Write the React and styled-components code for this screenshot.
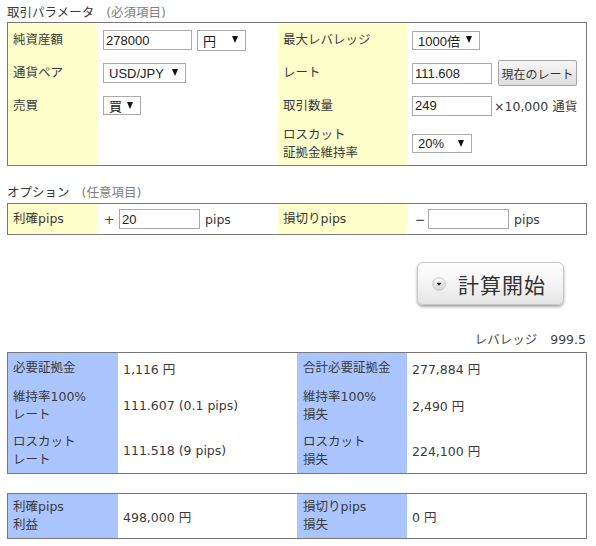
import React from "react";
import styled, { createGlobalStyle } from "styled-components";

const GlobalStyle = createGlobalStyle`
  body {
    margin: 0;
    background: #fff;
    color: #3a3a3a;
    font-family: "DejaVu Sans", "Noto Sans CJK JP", sans-serif;
    font-size: 12.5px;
  }
`;

const Page = styled.div`
  width: 580px;
  margin-left: 7px;
  padding-top: 4px;
`;

const SectionTitle = styled.div`
  line-height: 18px;
  margin-top: ${(p) => p.$top || 0}px;
  span {
    color: #808080;
    margin-left: 12px;
  }
`;

const Grid = styled.div`
  display: grid;
  grid-template-columns: ${(p) => p.$cols};
  grid-template-rows: ${(p) => p.$rows};
  border: 1px solid #777;
  margin-top: ${(p) => p.$top || 0}px;
`;

const Label = styled.div`
  display: flex;
  align-items: center;
  padding-left: ${(p) => p.$pad || 5}px;
  background: ${(p) => (p.$blue ? "#aac5ff" : "#ffffcc")};
  line-height: 18px;
`;

const Cell = styled.div`
  display: flex;
  align-items: center;
  padding-left: ${(p) => p.$pad || 5}px;
  white-space: nowrap;
`;

const Input = styled.input`
  box-sizing: border-box;
  width: ${(p) => p.$w}px;
  height: ${(p) => p.$h || 21}px;
  border: 1px solid #a9a9a9;
  padding: 0 2px;
  margin: 0;
  font-family: "Liberation Sans", Arial, "Noto Sans CJK JP", sans-serif;
  font-size: 13px;
  color: #222;
  outline: none;
`;

const SelectBox = styled.div`
  position: relative;
  box-sizing: border-box;
  width: ${(p) => p.$w}px;
  height: ${(p) => p.$h || 20}px;
  margin-left: ${(p) => p.$ml || 0}px;
  border: 1px solid #a9a9a9;
  background: #fff;
  display: flex;
  align-items: center;
  padding-left: 5px;
  font-family: "Liberation Sans", Arial, "Noto Sans CJK JP", sans-serif;
  font-size: 13px;
  color: #222;
`;

const Arrow = styled.span`
  position: absolute;
  right: 7px;
  top: 50%;
  margin-top: -4px;
  width: 0;
  height: 0;
  border-left: 3.5px solid transparent;
  border-right: 3.5px solid transparent;
  border-top: 7px solid #111;
`;

const Unit = styled.span`
  margin-left: ${(p) => p.$ml || 0}px;
`;

const RateButton = styled.button`
  box-sizing: border-box;
  width: 79px;
  height: 26px;
  margin-left: 6px;
  border: 1px solid #a6a6a6;
  border-radius: 2px;
  background: linear-gradient(#f6f6f6, #dedede);
  font-family: "Noto Sans CJK JP", sans-serif;
  font-size: 12px;
  color: #333;
  padding: 0;
`;

const Sign = styled.span`
  width: ${(p) => p.$w}px;
`;

const ButtonRow = styled.div`
  display: flex;
  justify-content: flex-end;
  padding-right: 23px;
  margin-top: 27px;
`;

const CalcButton = styled.button`
  box-sizing: border-box;
  width: 147px;
  height: 43px;
  border: 1px solid #c8c8c8;
  border-radius: 6px;
  background: linear-gradient(#ffffff 0%, #f4f4f4 50%, #e4e4e4 100%);
  box-shadow: 0 2px 3px rgba(0, 0, 0, 0.35);
  display: flex;
  align-items: center;
  gap: 12px;
  padding-left: 14px;
  font-family: "Noto Sans CJK JP", sans-serif;
  font-size: 21px;
  color: #333;
  letter-spacing: 1px;
`;

const Leverage = styled.div`
  margin-top: 26px;
  line-height: 18px;
  text-align: right;
  padding-right: 1px;
  color: #444;
  span {
    margin-left: 13px;
  }
`;

const Two = styled.div`
  line-height: 18px;
`;

const DownIcon = () => (
  <svg width="14" height="14" viewBox="0 0 14 14">
    <defs>
      <linearGradient id="dg" x1="0" y1="0" x2="0" y2="1">
        <stop offset="0" stopColor="#ffffff" />
        <stop offset="1" stopColor="#d4d4d4" />
      </linearGradient>
    </defs>
    <circle cx="7" cy="7" r="6.3" fill="url(#dg)" stroke="#bdbdbd" strokeWidth="0.8" />
    <path d="M4.4 5.7 L9.6 5.7 L7 8.8 Z" fill="#222" />
  </svg>
);

const Select = ({ w, h, ml, children }) => (
  <SelectBox $w={w} $h={h} $ml={ml}>
    {children}
    <Arrow />
  </SelectBox>
);

export default function App() {
  return (
    <Page>
      <GlobalStyle />
      <SectionTitle>
        取引パラメータ<span>(必須項目)</span>
      </SectionTitle>
      <Grid $cols="90px 180px 129px 1fr" $rows="34px 32px 33px 43px">
        <Label>純資産額</Label>
        <Cell>
          <Input $w={89} $h={20} defaultValue="278000" />
          <Select w={49} h={21} ml={5}>円</Select>
        </Cell>
        <Label>最大レバレッジ</Label>
        <Cell>
          <Select w={68} h={19}>1000倍</Select>
        </Cell>

        <Label>通貨ペア</Label>
        <Cell>
          <Select w={83} h={20}>USD/JPY</Select>
        </Cell>
        <Label>レート</Label>
        <Cell>
          <Input $w={80} defaultValue="111.608" />
          <RateButton>現在のレート</RateButton>
        </Cell>

        <Label>売買</Label>
        <Cell>
          <Select w={38} h={19}>買</Select>
        </Cell>
        <Label>取引数量</Label>
        <Cell>
          <Input $w={80} $h={20} defaultValue="249" />
          <Unit $ml={2}>×10,000 通貨</Unit>
        </Cell>

        <Label />
        <Cell />
        <Label>
          <Two>
            ロスカット
            <br />
            証拠金維持率
          </Two>
        </Label>
        <Cell>
          <Select w={60} h={19}>20%</Select>
        </Cell>
      </Grid>

      <SectionTitle $top={18}>
        オプション<span>(任意項目)</span>
      </SectionTitle>
      <Grid $cols="90px 180px 129px 1fr" $rows="30px" $top={1}>
        <Label>利確pips</Label>
        <Cell $pad={6}>
          <Sign $w={15}>+</Sign>
          <Input $w={81} $h={20} defaultValue="20" />
          <Unit $ml={5}>pips</Unit>
        </Cell>
        <Label>損切りpips</Label>
        <Cell $pad={8}>
          <Sign $w={13}>−</Sign>
          <Input $w={81} $h={20} defaultValue="" />
          <Unit $ml={5}>pips</Unit>
        </Cell>
      </Grid>

      <ButtonRow>
        <CalcButton>
          <DownIcon />
          計算開始
        </CalcButton>
      </ButtonRow>

      <Leverage>
        レバレッジ<span>999.5</span>
      </Leverage>

      <Grid $cols="110px 179px 110px 1fr" $rows="30px 45px 45px" $top={3}>
        <Label $blue>必要証拠金</Label>
        <Cell>1,116 円</Cell>
        <Label $blue $pad={6}>合計必要証拠金</Label>
        <Cell>277,884 円</Cell>

        <Label $blue>
          <Two>
            維持率100%
            <br />
            レート
          </Two>
        </Label>
        <Cell>111.607 (0.1 pips)</Cell>
        <Label $blue $pad={6}>
          <Two>
            維持率100%
            <br />
            損失
          </Two>
        </Label>
        <Cell>2,490 円</Cell>

        <Label $blue>
          <Two>
            ロスカット
            <br />
            レート
          </Two>
        </Label>
        <Cell>111.518 (9 pips)</Cell>
        <Label $blue $pad={6}>
          <Two>
            ロスカット
            <br />
            損失
          </Two>
        </Label>
        <Cell>224,100 円</Cell>
      </Grid>

      <Grid $cols="110px 179px 110px 1fr" $rows="44px" $top={19}>
        <Label $blue>
          <Two>
            利確pips
            <br />
            利益
          </Two>
        </Label>
        <Cell>498,000 円</Cell>
        <Label $blue $pad={6}>
          <Two>
            損切りpips
            <br />
            損失
          </Two>
        </Label>
        <Cell>0 円</Cell>
      </Grid>
    </Page>
  );
}
